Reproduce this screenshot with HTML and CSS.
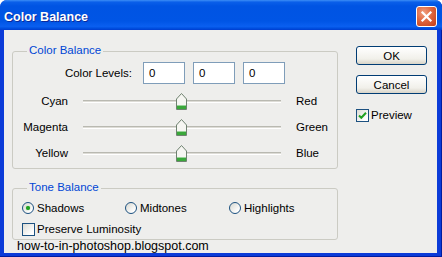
FILE: index.html
```html
<!DOCTYPE html>
<html>
<head>
<meta charset="utf-8">
<link rel="stylesheet" href="styles.css">
</head>
<body>
<div class="window">
  <div class="titlebar">
    <span class="title">Color Balance</span>
    <span class="close"><svg width="13" height="13" viewBox="0 0 13 13"><path d="M2.5 2.5 L10.5 10.5 M10.5 2.5 L2.5 10.5" stroke="#fff" stroke-width="2.2" stroke-linecap="square"/></svg></span>
  </div>
  <div class="client">
    <div class="main">
      <fieldset class="group group-color">
        <legend>Color Balance</legend>
        <div class="levels">
          <span class="levels-label">Color Levels:</span>
          <span class="field">0</span>
          <span class="field">0</span>
          <span class="field">0</span>
        </div>
        <div class="slider-row">
          <span class="lbl-l">Cyan</span>
          <span class="track"><svg class="thumb" width="11" height="17" viewBox="0 0 11 17"><path d="M0.5 6 L5.5 0.5 L10.5 6 V16.5 H0.5 Z" fill="#f6f6f2" stroke="#6f8270"/><rect x="1" y="13" width="9" height="3" fill="#3aa83a"/><rect x="1" y="12" width="9" height="1" fill="#9ad39a"/></svg></span>
          <span class="lbl-r">Red</span>
        </div>
        <div class="slider-row">
          <span class="lbl-l">Magenta</span>
          <span class="track"><svg class="thumb" width="11" height="17" viewBox="0 0 11 17"><path d="M0.5 6 L5.5 0.5 L10.5 6 V16.5 H0.5 Z" fill="#f6f6f2" stroke="#6f8270"/><rect x="1" y="13" width="9" height="3" fill="#3aa83a"/><rect x="1" y="12" width="9" height="1" fill="#9ad39a"/></svg></span>
          <span class="lbl-r">Green</span>
        </div>
        <div class="slider-row">
          <span class="lbl-l">Yellow</span>
          <span class="track"><svg class="thumb" width="11" height="17" viewBox="0 0 11 17"><path d="M0.5 6 L5.5 0.5 L10.5 6 V16.5 H0.5 Z" fill="#f6f6f2" stroke="#6f8270"/><rect x="1" y="13" width="9" height="3" fill="#3aa83a"/><rect x="1" y="12" width="9" height="1" fill="#9ad39a"/></svg></span>
          <span class="lbl-r">Blue</span>
        </div>
      </fieldset>
      <fieldset class="group group-tone">
        <legend>Tone Balance</legend>
        <div class="radios">
          <span class="opt"><span class="radio on"></span>Shadows</span>
          <span class="opt"><span class="radio"></span>Midtones</span>
          <span class="opt"><span class="radio"></span>Highlights</span>
        </div>
        <div class="check-row">
          <span class="box"></span>Preserve Luminosity
        </div>
      </fieldset>
      <div class="watermark">how-to-in-photoshop.blogspot.com</div>
    </div>
    <div class="side">
      <button class="btn">OK</button>
      <button class="btn btn-cancel">Cancel</button>
      <div class="preview">
        <span class="box"><svg width="11" height="11" viewBox="0 0 11 11"><path d="M2 5.5 L4.3 7.8 L9 2.8" stroke="#21a121" stroke-width="2" fill="none"/></svg></span>Preview
      </div>
    </div>
  </div>
</div>
</body>
</html>
```
FILE: styles.css
```css
body {
  margin: 0;
  background: #ffffff;
  font-family: "Liberation Sans", Arial, sans-serif;
  font-size: 11.5px;
  color: #000;
}

.window {
  width: 442px;
  height: 257px;
  display: flex;
  flex-direction: column;
  border-radius: 7px 7px 0 0;
  overflow: hidden;
  background: #0b3bd8;
  box-shadow: inset -1px -1px 0 #001c9e;
}

.titlebar {
  flex: none;
  height: 30px;
  box-sizing: border-box;
  display: flex;
  align-items: center;
  padding: 3px 5px 0 4px;
  background: linear-gradient(to bottom, #3c8ef6 0%, #0a5fe9 7%, #0054e3 20%, #0055e5 70%, #0a5ff0 88%, #0050e0 94%, #003dd0 100%);
}

.title {
  color: #fff;
  font-weight: bold;
  font-size: 12.5px;
  text-shadow: 1px 1px 0 #0c2a9a;
}

.close {
  margin-left: auto;
  width: 21px;
  height: 21px;
  box-sizing: border-box;
  border: 1px solid #fff;
  border-radius: 3px;
  background: radial-gradient(circle at 35% 30%, #f0a080 0%, #e0673f 45%, #c33c15 100%);
  display: flex;
  align-items: center;
  justify-content: center;
}

.client {
  flex: 1;
  margin: 0 5px 4px 4px;
  padding-left: 8px;
  background: #eeeeec;
  display: flex;
}

.main {
  width: 326px;
  display: flex;
  flex-direction: column;
}

.group {
  width: 326px;
  box-sizing: border-box;
  margin: 0;
  padding: 0 0 2px;
  min-width: 0;
  border: 1px solid #cbcbc3;
  border-radius: 3px;
}

.group legend {
  margin-left: 14px;
  padding: 0 2px 2px;
  line-height: 14px;
  color: #0046d5;
}

.group-color {
  margin-top: 13px;
}

.group-tone {
  margin-top: 11px;
}

.levels {
  display: flex;
  align-items: center;
  height: 22px;
  margin-top: 3px;
  margin-bottom: 4px;
}

.levels-label {
  width: 119px;
  text-align: right;
  margin-right: 11px;
}

.field {
  width: 42px;
  height: 22px;
  box-sizing: border-box;
  border: 1px solid #7f9db9;
  background: #fff;
  padding-left: 5px;
  line-height: 20px;
  margin-right: 8px;
}

.slider-row {
  display: flex;
  align-items: center;
  height: 26px;
}

.lbl-l {
  width: 55px;
  text-align: right;
}

.track {
  position: relative;
  width: 198px;
  height: 3px;
  box-sizing: border-box;
  margin: 0 15px;
  border-top: 1px solid #b9b9b1;
  border-bottom: 1px solid #ffffff;
  background: #dddcd6;
}

.thumb {
  position: absolute;
  left: 93px;
  top: -8px;
}

.radios {
  display: grid;
  grid-template-columns: 103px 104px auto;
  height: 16px;
  margin-top: 4px;
  padding-left: 9px;
}

.opt {
  display: flex;
  align-items: center;
}

.radio {
  width: 12px;
  height: 12px;
  box-sizing: border-box;
  border: 1px solid #1c5180;
  border-radius: 50%;
  background: linear-gradient(135deg, #d8d8d0, #ffffff 80%);
  margin-right: 3px;
  display: flex;
  align-items: center;
  justify-content: center;
}

.radio.on::after {
  content: "";
  width: 4px;
  height: 4px;
  border-radius: 50%;
  background: #21a121;
  box-shadow: 0 0 1px #4cc04c;
}

.check-row {
  display: flex;
  align-items: center;
  height: 16px;
  margin-top: 5px;
  padding-left: 9px;
}

.box {
  width: 13px;
  height: 13px;
  box-sizing: border-box;
  border: 1px solid #1c5180;
  background: linear-gradient(135deg, #dcdcd5, #ffffff 80%);
  margin-right: 2px;
  display: flex;
  align-items: center;
  justify-content: center;
}

.watermark {
  padding-left: 5px;
  line-height: 12px;
  font-size: 12.5px;
  color: #000;
}

.side {
  width: 71px;
  margin-left: 18px;
  padding-top: 16px;
  display: flex;
  flex-direction: column;
}

.btn {
  width: 71px;
  height: 19px;
  box-sizing: border-box;
  padding: 0;
  border: 1px solid #003c74;
  border-radius: 3px;
  background: linear-gradient(to bottom, #ffffff, #f1f0ea 70%, #d8d4c8);
  font-family: inherit;
  font-size: 11.5px;
  color: #000;
}

.btn-cancel {
  margin-top: 10px;
}

.preview {
  display: flex;
  align-items: center;
  margin-top: 14px;
  height: 14px;
}
```
